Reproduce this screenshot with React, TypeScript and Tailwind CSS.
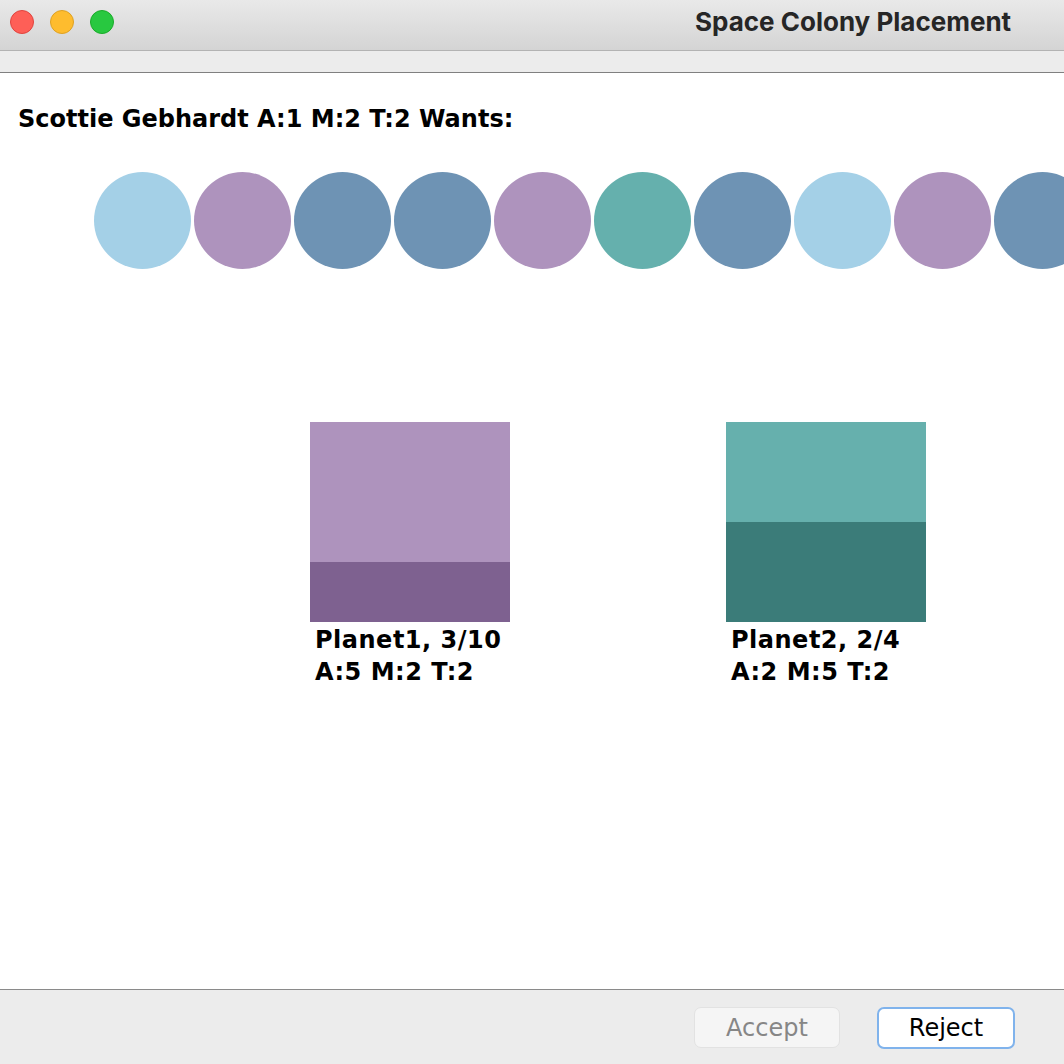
import React from "react";

const circles = [
  "#a4d0e7",
  "#ae93bd",
  "#6e93b4",
  "#6e93b4",
  "#ae93bd",
  "#65b0ad",
  "#6e93b4",
  "#a4d0e7",
  "#ae93bd",
  "#6e93b4",
];

function Planet({
  top,
  bottom,
  topH,
  name,
  stats,
}: {
  top: string;
  bottom: string;
  topH: number;
  name: string;
  stats: string;
}) {
  return (
    <div className="flex flex-col w-[200px]">
      <div className="flex flex-col h-[200px] w-[200px]">
        <div style={{ height: topH, background: top }} />
        <div className="flex-1" style={{ background: bottom }} />
      </div>
      <div className="pl-[5px] pt-[2px] text-[24px] leading-[32px] font-bold tracking-[0.5px] text-black font-['DejaVu_Sans',sans-serif] whitespace-nowrap">
        <div>{name}</div>
        <div>{stats}</div>
      </div>
    </div>
  );
}

export default function App() {
  return (
    <div className="w-[1064px] h-[1064px] overflow-hidden flex flex-col bg-white">
      {/* Title bar */}
      <div className="h-[51px] shrink-0 pb-[6px] bg-gradient-to-b from-[#e9e9e9] to-[#d4d4d4] border-b border-[#b3b3b3] flex items-center">
        <div className="flex gap-4 pl-[10px]">
          <div className="w-6 h-6 rounded-full bg-[#fe5f57] border border-[#e0443e]" />
          <div className="w-6 h-6 rounded-full bg-[#febc2e] border border-[#dea123]" />
          <div className="w-6 h-6 rounded-full bg-[#28c840] border border-[#1aab29]" />
        </div>
        <div className="ml-[581px] text-[26px] leading-[30px] font-bold text-[#262626] font-['Inter',sans-serif] whitespace-nowrap">
          Space Colony Placement
        </div>
      </div>
      {/* toolbar strip */}
      <div className="h-[22px] shrink-0 bg-[#ececec] border-b border-[#808080]" />
      {/* Content */}
      <div className="flex-1 flex flex-col bg-white">
        <div className="pl-[18px] pt-[32px] text-[24px] leading-[28px] font-bold text-black font-['DejaVu_Sans',sans-serif] whitespace-nowrap">
          Scottie Gebhardt A:1 M:2 T:2 Wants:
        </div>
        <div className="flex gap-[3px] pl-[94px] mt-[39px] w-[1064px] overflow-hidden">
          {circles.map((c, i) => (
            <div
              key={i}
              className="w-[97px] h-[97px] rounded-full shrink-0"
              style={{ background: c }}
            />
          ))}
        </div>
        <div className="flex pl-[310px] gap-[216px] mt-[153px]">
          <Planet
            top="#ae93bd"
            bottom="#7e6190"
            topH={140}
            name="Planet1, 3/10"
            stats="A:5 M:2 T:2"
          />
          <Planet
            top="#66b0ad"
            bottom="#3b7c79"
            topH={100}
            name="Planet2, 2/4"
            stats="A:2 M:5 T:2"
          />
        </div>
      </div>
      {/* Bottom bar */}
      <div className="h-[75px] shrink-0 bg-[#ececec] border-t border-[#8a8a8a] flex items-start justify-end pt-[17px] pr-[49px] gap-[37px] font-['DejaVu_Sans',sans-serif]">
        <div className="w-[146px] h-[41px] rounded-[7px] bg-[#f5f5f5] border border-[#e2e2e2] flex items-center justify-center text-[24px] text-[#868686]">
          Accept
        </div>
        <div className="w-[138px] h-[42px] rounded-[7px] bg-white border-2 border-[#80b3ec] flex items-center justify-center text-[24px] text-black">
          Reject
        </div>
      </div>
    </div>
  );
}
